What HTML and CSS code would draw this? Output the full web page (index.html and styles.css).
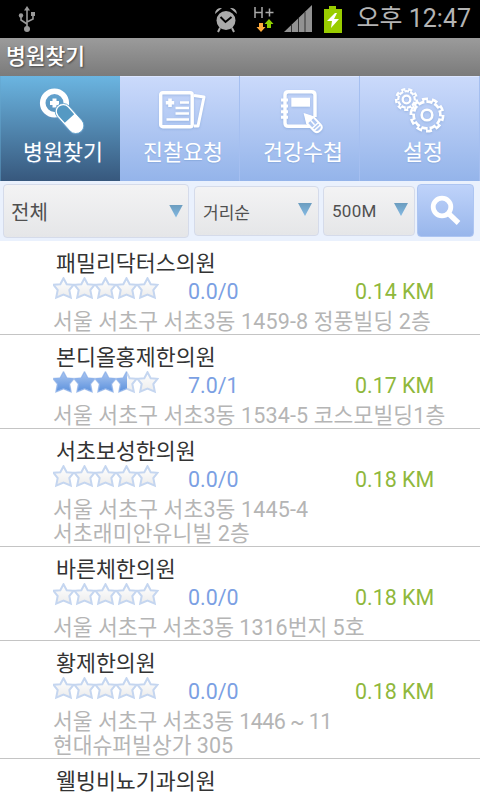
FILE: index.html
```html
<!DOCTYPE html>
<html lang="ko">
<head>
<meta charset="utf-8">
<title>병원찾기</title>
<link rel="stylesheet" href="styles.css">
</head>
<body>
<svg class="defs" width="0" height="0">
  <defs>
    <linearGradient id="empty" x1="0" y1="0" x2="0" y2="1"><stop offset="0" stop-color="#fff"/><stop offset="1" stop-color="#ececec"/></linearGradient>
    <linearGradient id="full" x1="0" y1="0" x2="0" y2="1"><stop offset="0" stop-color="#a9c5f0"/><stop offset="1" stop-color="#5d92dd"/></linearGradient>
    <path id="star" d="M10.500 1.200 L13.700 7.200 L20.500 7.800 L16.300 13 L17.800 20.600 L10.500 17.600 L3.200 20.600 L4.700 13 L.5 7.800 L7.300 7.200 Z"/>
    <g id="stars"><use href="#star"/><use href="#star" x="21"/><use href="#star" x="42"/><use href="#star" x="63"/><use href="#star" x="84"/></g>
    <clipPath id="rated"><rect width="74" height="23"/></clipPath>
    <g id="row" stroke="#c5d6f0" stroke-width="2" fill="url(#empty)"><use href="#stars"/></g>
    <mask id="bigGear" maskUnits="userSpaceOnUse" x="8" y="5" width="46" height="46">
      <circle cx="31" cy="28" r="14.700" fill="#fff"/>
      <circle cx="31" cy="28" r="15.500" fill="none" stroke="#fff" stroke-width="4" pathLength="10" stroke-dasharray=".6 .4"/>
      <circle cx="31" cy="28" r="12" fill="#000"/>
      <circle cx="31" cy="28" r="13.200" fill="none" stroke="#000" stroke-width="3.400" pathLength="10" stroke-dasharray=".24 .76" stroke-dashoffset="-.18"/>
    </mask>
    <mask id="smallGear" maskUnits="userSpaceOnUse" x="-6" y="-4" width="34" height="34">
      <circle cx="10.500" cy="12.500" r="9.400" fill="#fff"/>
      <circle cx="10.500" cy="12.500" r="10" fill="none" stroke="#fff" stroke-width="3.200" pathLength="9" stroke-dasharray=".58 .42"/>
      <circle cx="10.500" cy="12.500" r="7.200" fill="#000"/>
      <circle cx="10.500" cy="12.500" r="8" fill="none" stroke="#000" stroke-width="2.400" pathLength="9" stroke-dasharray=".2 .8" stroke-dashoffset="-.19"/>
    </mask>
  </defs>
</svg>
<header class="status">
  <svg class="usb" width="18" height="28" viewBox="0 0 18 28" fill="none" stroke="#999" stroke-width="1.600"><path d="M9 4V23M9 19L3 15V11M9 17L15 14V9"/><path d="M6 5.500L9 1l3 4.500z" fill="#999" stroke="none"/><circle cx="9" cy="24" r="3" fill="#999" stroke="none"/><circle cx="3" cy="10.500" r="2.200" fill="#999" stroke="none"/><path d="M13 7h4v4h-4z" fill="#999" stroke="none"/></svg>
  <svg class="indicators" width="128" height="38" viewBox="0 0 128 38">
    <g fill="#aaa"><circle cx="11" cy="20.500" r="9.500"/><path d="M0 14a6 6 0 0 1 7-6zM22 14a6 6 0 0 0-7-6z"/></g>
    <path d="M5 28l-2 4M17 28l2 4" stroke="#aaa" stroke-width="2"/><path d="M5.500 17l5 5 6-5" fill="none" stroke="#000" stroke-width="2"/>
    <path d="M40 7v11M47 7v11M40 12.500h7M50.500 12.500h8M54.500 8.500v8" fill="none" stroke="#aaa" stroke-width="1.500"/>
    <path d="M44 23h4v4h2.500L46 32l-4.500-5H44z" fill="#ffaa3c"/><path d="M52 28h4v-4h2.500L54 19l-4.500 5H52z" fill="#8fd000"/>
    <path d="M69 32L97 5V32z" fill="#929292"/><path d="M76.500 25v7M83.500 18v14M90 12v20" stroke="#333" stroke-width="1"/>
    <path d="M109 9h5V6h7v3h6v24h-18z" fill="#99cc00"/><path d="M120 13l-8 8h5l-1 7 8-9h-5l3-6z" fill="#fff"/>
  </svg>
  <span class="clock">오후 12:47</span>
</header>
<h1 class="title">병원찾기</h1>
<nav class="tabs">
  <a class="tab active"><svg width="48" height="48" viewBox="0 0 48 48"><circle cx="18.500" cy="16" r="11.800" fill="none" stroke="#fff" stroke-width="5.600"/><path d="M18.500 11.500v9M14 16h9" stroke="#fff" stroke-width="4"/><g transform="translate(33.500 31.500) rotate(48)"><rect x="-17.500" y="-8" width="35" height="16" rx="8" fill="#fff" stroke="#5c9fca" stroke-width=".8"/><path d="M0-6.300H-9.500a6.300 6.300 0 0 0 0 12.600H0z" fill="#5599c3"/></g></svg><span>병원찾기</span></a>
  <a class="tab"><svg width="48" height="48" viewBox="0 0 48 48" fill="none" stroke="#fff" stroke-width="3" stroke-linejoin="round"><path d="M38 8.500l10 1.500-6 29h-4"/><rect x="4.700" y="5.700" width="31.500" height="34" rx="2" stroke-width="3.400"/><path d="M14 11.500v8.500M9.800 15.700h8.400" stroke-width="3.600"/><path d="M24 15.500h9M19.500 21h13.500M19.500 26.500h13.500M10.500 32.500h22.500" stroke-width="2.400"/></svg><span>진찰요청</span></a>
  <a class="tab"><svg width="48" height="48" viewBox="0 0 48 48" fill="none" stroke="#fff"><path d="M39 30V8q0-3.300-3.300-3.300H12.300Q9 4.700 9 8v28q0 3.300 3.300 3.300H34" stroke-width="3.400"/><path d="M5 13h7M5 19h7M5 24.700h7M5 30.300h7" stroke-width="3"/><path d="M15.300 10.700h18.700v9H15.300z" fill="#fff" stroke="none"/><g transform="translate(29 27.500) rotate(47)"><path d="M0 0L8-4.500H18q4 0 4 4.500t-4 4.500H8z" fill="#afc7f1" stroke-width="2"/><path d="M0 0l8-4.500v9z" fill="#fff"/><path d="M8 0h6M15-4v8M18-4v8" stroke-width="1.500"/></g></svg><span>건강수첩</span></a>
  <a class="tab"><svg width="48" height="48" viewBox="0 0 48 48" fill="none" stroke="#fff"><path d="M-6-4h34v34H-6z" fill="#fff" stroke="none" mask="url(#smallGear)"/><circle cx="10.500" cy="12.500" r="3.800" stroke-width="2.300"/><path d="M8 5h46v46H8z" fill="#fff" stroke="none" mask="url(#bigGear)"/><circle cx="31" cy="28" r="5.300" stroke-width="2.600"/></svg><span>설정</span></a>
</nav>
<section class="filters">
  <div class="select wide"><span>전체</span><i></i></div>
  <div class="select mid"><span>거리순</span><i></i></div>
  <div class="select small"><span>500M</span><i></i></div>
  <button class="search" aria-label="검색"><svg width="32" height="32" viewBox="0 0 32 32" fill="none" stroke="#fff"><circle cx="12" cy="12" r="8.800" stroke-width="4.800"/><path d="M18 18l10.500 10" stroke-width="5.200"/></svg></button>
</section>
<main>
  <article><h2>패밀리닥터스의원</h2><div class="meta"><svg width="106" height="23"><use href="#row"/></svg><b>0.0/0</b><em>0.14 KM</em></div><p class="spaced">서울 서초구 서초3동 1459-8 정풍빌딩 2층</p></article>
  <article><h2>본디올홍제한의원</h2><div class="meta"><svg width="106" height="23"><use href="#row"/><g clip-path="url(#rated)" fill="url(#full)" stroke="#8cb1eb"><use href="#stars"/></g></svg><b>7.0/1</b><em>0.17 KM</em></div><p class="spaced">서울 서초구 서초3동 1534-5 코스모빌딩1층</p></article>
  <article><h2>서초보성한의원</h2><div class="meta"><svg width="106" height="23"><use href="#row"/></svg><b>0.0/0</b><em>0.18 KM</em></div><p class="spaced">서울 서초구 서초3동 1445-4<br>서초래미안유니빌 2층</p></article>
  <article><h2>바른체한의원</h2><div class="meta"><svg width="106" height="23"><use href="#row"/></svg><b>0.0/0</b><em>0.18 KM</em></div><p>서울 서초구 서초3동 1316번지 5호</p></article>
  <article><h2>황제한의원</h2><div class="meta"><svg width="106" height="23"><use href="#row"/></svg><b>0.0/0</b><em>0.18 KM</em></div><p>서울 서초구 서초3동 <span class="tight">1446 ~ 11</span><br>현대슈퍼빌상가 305</p></article>
  <article class="last"><h2>웰빙비뇨기과의원</h2></article>
</main>
</body>
</html>
```
FILE: styles.css
```css
* { box-sizing: border-box; }
body {
  margin: 0;
  width: 480px;
  height: 800px;
  overflow: hidden;
  background: #fff;
  font-family: Roboto, "Noto Sans CJK KR", sans-serif;
  display: flex;
  flex-direction: column;
}
.defs { position: absolute; }
.status {
  flex: none;
  height: 38px;
  background: #000;
  display: flex;
  align-items: center;
  padding: 0 9px 0 18px;
}
.usb { flex: none; margin-top: -1px; }
.indicators { flex: none; margin-left: 179px; }
.clock {
  margin-left: auto;
  color: #b4b4b4;
  font-size: 25px;
  line-height: 36px;
  white-space: nowrap;
}
.title {
  flex: none;
  height: 38px;
  margin: 0;
  padding: 1px 0 0 6px;
  background: linear-gradient(#9b9b9b, #7b7b7b);
  color: #fff;
  font-size: 21.5px;
  font-weight: 500;
  line-height: 36px;
  text-shadow: 1px 1px 2px #444;
}
.tabs {
  flex: none;
  height: 105px;
  display: grid;
  grid-template-columns: repeat(4, 120px);
}
.tab {
  display: flex;
  flex-direction: column;
  align-items: center;
  padding-top: 11px;
  background: linear-gradient(#cbdafb, #94b4ea);
  box-shadow: inset -1px 0 #a5bff0, inset 0 1px #dce6ff;
  color: #fff;
  font-size: 21.7px;
}
.tab.active {
  background: linear-gradient(#6bb5e1, #37587d);
  box-shadow: inset 1px 0 #63a5ce80;
}
.tab svg {
  flex: none;
  overflow: visible;
  filter: drop-shadow(0 1px 1px #6f94c866);
}
.tab span {
  line-height: 30px;
  margin-top: 3px;
  padding-left: 6px;
  text-shadow: 0 1px 1px #6f94c866;
}
.filters {
  flex: none;
  height: 60px;
  background: #eaf1fd;
  display: flex;
  align-items: flex-start;
  padding: 3px 6px 0 3px;
}
.select {
  display: flex;
  align-items: center;
  justify-content: space-between;
  border: 1px solid #d5dbea;
  border-radius: 4px;
  background: linear-gradient(#f3f3f4, #e5e6e8);
  color: #505050;
  font-size: 17px;
}
.select i {
  width: 14px;
  height: 13px;
  background: linear-gradient(#6c9dbf, #83b9e3);
  clip-path: polygon(0 0, 100% 0, 50% 100%);
}
.wide { width: 186px; height: 54px; padding: 0 5px 0 7px; font-size: 20px; }
.mid { width: 125px; height: 50px; margin: 2px 0 0 5px; padding: 0 6px 0 8px; }
.small { width: 92px; height: 50px; margin: 2px 0 0 4px; padding: 0 6px 0 8px; }
.small span { letter-spacing: .3px; }
.mid i, .small i { margin-top: -3px; }
.search {
  width: 57px;
  height: 53px;
  margin: 0 0 0 2px;
  padding: 4px 0 0;
  border: 1px solid #adc5f2;
  border-radius: 4px;
  background: linear-gradient(#bfd3fa, #98b6eb);
}
article {
  border-bottom: 1px solid #c4c4c4;
  padding: 10px 0 0 53px;
}
article.last { border-bottom: 0; }
h2 {
  margin: 0;
  padding-left: 3px;
  color: #333;
  font-size: 21.7px;
  font-weight: 400;
  line-height: 26px;
}
.meta {
  display: flex;
  height: 33px;
  line-height: 30px;
  font-size: 21.4px;
}
.meta b {
  width: 167px;
  margin-left: 29px;
  color: #7ba0e3;
  font-weight: 400;
}
.meta em { color: #8fb83c; font-style: normal; }
article p {
  margin: 0;
  color: #b5b5b5;
  font-size: 21.5px;
  line-height: 24px;
  white-space: nowrap;
}
.spaced { letter-spacing: .14px; }
.tight { letter-spacing: -.6px; }
```
